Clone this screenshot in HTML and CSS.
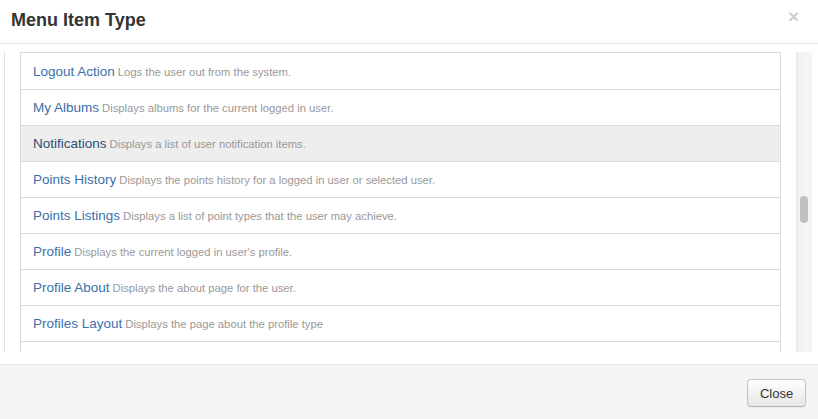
FILE: index.html
```html
<!DOCTYPE html>
<html>
<head>
<meta charset="utf-8">
<title>Menu Item Type</title>
<link rel="stylesheet" href="styles.css">
</head>
<body>
<div class="modal">
  <div class="modal-header">
    <h3 class="modal-title">Menu Item Type</h3>
    <span class="modal-close">&times;</span>
  </div>
  <div class="modal-body">
    <div class="pane">
      <ul class="item-list">
        <li class="item"><a class="item-title">Logout Action</a> <span class="item-desc">Logs the user out from the system.</span></li>
        <li class="item"><a class="item-title">My Albums</a> <span class="item-desc">Displays albums for the current logged in user.</span></li>
        <li class="item is-hover"><a class="item-title">Notifications</a> <span class="item-desc">Displays a list of user notification items.</span></li>
        <li class="item"><a class="item-title">Points History</a> <span class="item-desc">Displays the points history for a logged in user or selected user.</span></li>
        <li class="item"><a class="item-title">Points Listings</a> <span class="item-desc">Displays a list of point types that the user may achieve.</span></li>
        <li class="item"><a class="item-title">Profile</a> <span class="item-desc">Displays the current logged in user's profile.</span></li>
        <li class="item"><a class="item-title">Profile About</a> <span class="item-desc">Displays the about page for the user.</span></li>
        <li class="item"><a class="item-title">Profiles Layout</a> <span class="item-desc">Displays the page about the profile type</span></li>
        <li class="item"></li>
      </ul>
    </div>
    <div class="scrollbar"><div class="scroll-thumb"></div></div>
  </div>
  <div class="modal-footer">
    <button class="btn">Close</button>
  </div>
</div>
</body>
</html>
```

FILE: styles.css
```css
html, body {
  margin: 0;
  padding: 0;
  background: #fff;
}
body {
  font-family: "Liberation Sans", Arial, Helvetica, sans-serif;
  color: #333;
}
.modal {
  width: 818px;
  height: 419px;
  display: flex;
  flex-direction: column;
  overflow: hidden;
}
.modal-header {
  height: 43px;
  border-bottom: 1px solid #e5e5e5;
  display: flex;
  align-items: center;
  justify-content: space-between;
  padding: 0 19px 0 11px;
  flex: none;
}
.modal-title {
  margin: 0;
  font-size: 18px;
  font-weight: bold;
  color: #333;
  line-height: 20px;
  position: relative;
  top: -2px;
}
.modal-close {
  font-size: 19px;
  font-weight: bold;
  color: #cfcfcf;
  line-height: 20px;
  position: relative;
  top: -5px;
}
.modal-body {
  height: 300px;
  padding: 8px 6px 12px 4px;
  display: flex;
  flex: none;
}
.pane {
  flex: 1;
  border-left: 1px solid #e0e0e0;
  padding: 0 15px 0 15px;
  overflow: hidden;
}
.item-list {
  list-style: none;
  margin: 0;
  padding: 1px 0 0 0;
  border: 1px solid #dadada;
  border-bottom: none;
}
.item {
  height: 35px;
  border-bottom: 1px solid #dadada;
  display: flex;
  align-items: center;
  padding-left: 12px;
  white-space: nowrap;
}
.item.is-hover {
  background: #eeeeee;
}
.item-title {
  font-size: 13.5px;
  color: #3b70aa;
  margin-right: 3px;
}
.is-hover .item-title {
  color: #2b4f73;
}
.item-desc {
  font-size: 11.25px;
  color: #999;
}
.scrollbar {
  width: 16px;
  flex: none;
  background: linear-gradient(to right, #e6e6e6 0, #f0f0f0 2px, #f7f7f7 60%, #f3f3f3 100%);
  position: relative;
}
.scroll-thumb {
  position: absolute;
  left: 4px;
  top: 144px;
  width: 8px;
  height: 27px;
  border-radius: 4px;
  background: #c1c1c1;
}
.modal-footer {
  flex: 1;
  background: #f5f5f5;
  border-top: 1px solid #e5e5e5;
  display: flex;
  align-items: flex-start;
  justify-content: flex-end;
  padding: 14px 12px 0 0;
}
.btn {
  width: 59px;
  height: 28px;
  border: 1px solid #c4c4c4;
  border-bottom-color: #b3b3b3;
  border-radius: 4px;
  background: linear-gradient(to bottom, #ffffff, #e6e6e6);
  font-family: "Liberation Sans", Arial, Helvetica, sans-serif;
  font-size: 13px;
  color: #333;
  padding: 0;
  box-shadow: inset 0 1px 0 rgba(255,255,255,0.2), 0 1px 2px rgba(0,0,0,0.05);
}
```
